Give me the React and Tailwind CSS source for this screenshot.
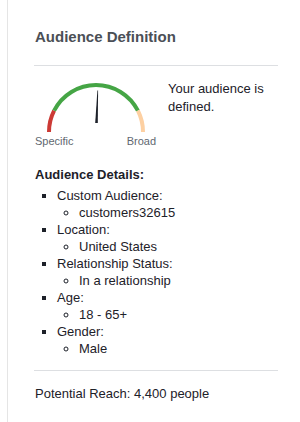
export default function App() {
  const details = [
    { label: "Custom Audience:", value: "customers32615" },
    { label: "Location:", value: "United States" },
    { label: "Relationship Status:", value: "In a relationship" },
    { label: "Age:", value: "18 - 65+" },
    { label: "Gender:", value: "Male" },
  ];

  return (
    <div className="bg-white pl-[7px] font-['Liberation_Sans',Arial,sans-serif] text-[#1d2129]">
      <div className="min-h-[422px] border-l border-[#e5e5e5] pl-[26px] pr-[22px] pt-[28px]">
        <h1 className="text-[15px] leading-[18px] font-bold text-[#4b4f56] pl-[1px]">Audience Definition</h1>
        <div className="mt-[19px] border-t border-[#dddfe2]" />

        {/* Gauge */}
        <div className="mt-[14px] flex gap-[12px]">
          <div className="w-[122px] shrink-0">
            <svg width="122" height="54" viewBox="0 0 122 54">
              <path d="M15 52 A47 47 0 0 1 20.1 30.7" fill="none" stroke="#cc3a35" strokeWidth="4" />
              <path d="M20.1 30.7 A47 47 0 0 1 103.9 30.7" fill="none" stroke="#45a545" strokeWidth="4" />
              <path d="M103.9 30.7 A47 47 0 0 1 109 52" fill="none" stroke="#fdd0a2" strokeWidth="4" />
              <polygon points="63.4,10.5 64.1,10.5 63.8,43 61.2,43" fill="#1d2129" />
            </svg>
            <div className="mt-[1px] flex justify-between pl-[1px] text-[11px] leading-[13px] text-[#616770]">
              <span>Specific</span>
              <span>Broad</span>
            </div>
          </div>
          <p className="text-[13px] leading-[18px]">Your audience is defined.</p>
        </div>

        {/* Details */}
        <h2 className="mt-[18px] pl-[1px] text-[13px] leading-[17px] font-bold">Audience Details:</h2>
        <ul className="mt-[4px] list-[square] pl-[23px] text-[13px] leading-[17px]">
          {details.map((d) => (
            <li key={d.label}>
              {d.label}
              <ul className="list-[circle] pl-[22px]">
                <li>{d.value}</li>
              </ul>
            </li>
          ))}
        </ul>

        <div className="mt-[13px] border-t border-[#dddfe2]" />
        <p className="mt-[14px] pl-[1px] text-[13px] leading-[17px]">Potential Reach: 4,400 people</p>
      </div>
    </div>
  );
}
